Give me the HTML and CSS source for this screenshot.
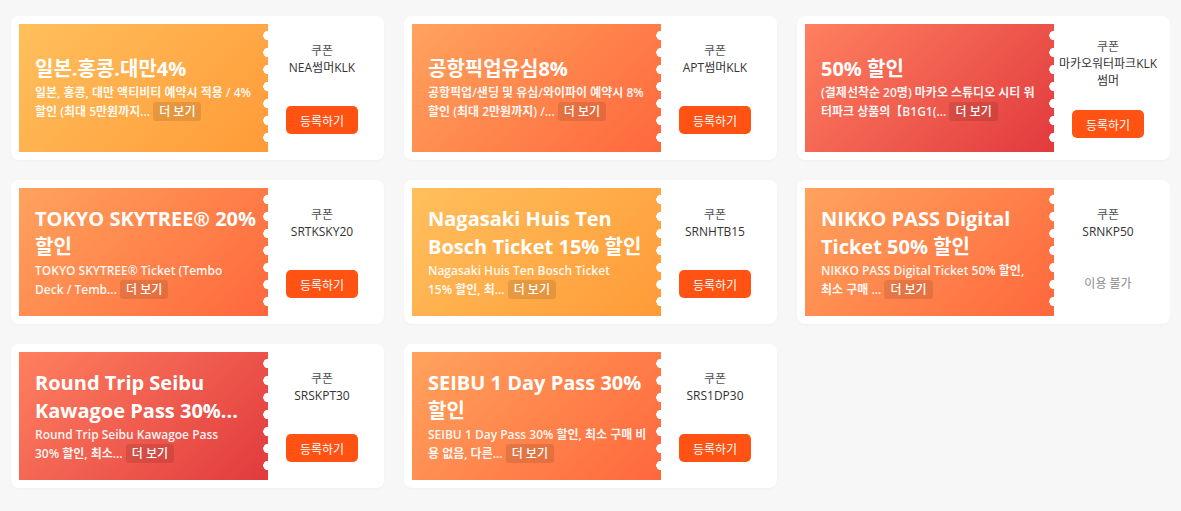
FILE: index.html
```html
<!DOCTYPE html>
<html lang="ko">
<head>
<meta charset="utf-8">
<title>쿠폰</title>
<link rel="stylesheet" href="styles.css">
</head>
<body>
<div class="grid">
  <div class="card">
    <div class="ticket t-yellow">
      <div class="title">일본.홍콩.대만4%</div>
      <div class="desc">일본, 홍콩, 대만 액티비티 예약시 적용 / 4%<br>할인 (최대 5만원까지... <span class="chip">더 보기</span></div>
    </div>
    <div class="side">
      <div class="info"><div class="label">쿠폰</div><div class="code">NEA썸머KLK</div></div>
      <button class="btn">등록하기</button>
    </div>
  </div>
  <div class="card">
    <div class="ticket t-orange">
      <div class="title">공항픽업유심8%</div>
      <div class="desc">공항픽업/샌딩 및 유심/와이파이 예약시 8%<br>할인 (최대 2만원까지) /... <span class="chip">더 보기</span></div>
    </div>
    <div class="side">
      <div class="info"><div class="label">쿠폰</div><div class="code">APT썸머KLK</div></div>
      <button class="btn">등록하기</button>
    </div>
  </div>
  <div class="card">
    <div class="ticket t-red">
      <div class="title">50% 할인</div>
      <div class="desc">(결제선착순 20명) 마카오 스튜디오 시티 워<br>터파크 상품의【B1G1(... <span class="chip">더 보기</span></div>
    </div>
    <div class="side side-tight">
      <div class="info"><div class="label">쿠폰</div><div class="code">마카오워터파크KLK<br>썸머</div></div>
      <button class="btn">등록하기</button>
    </div>
  </div>

  <div class="card">
    <div class="ticket t-orange">
      <div class="title">TOKYO SKYTREE® 20%<br>할인</div>
      <div class="desc">TOKYO SKYTREE® Ticket (Tembo<br>Deck / Temb... <span class="chip">더 보기</span></div>
    </div>
    <div class="side">
      <div class="info"><div class="label">쿠폰</div><div class="code">SRTKSKY20</div></div>
      <button class="btn">등록하기</button>
    </div>
  </div>
  <div class="card">
    <div class="ticket t-yellow">
      <div class="title">Nagasaki Huis Ten<br>Bosch Ticket 15% 할인</div>
      <div class="desc">Nagasaki Huis Ten Bosch Ticket<br>15% 할인, 최... <span class="chip">더 보기</span></div>
    </div>
    <div class="side">
      <div class="info"><div class="label">쿠폰</div><div class="code">SRNHTB15</div></div>
      <button class="btn">등록하기</button>
    </div>
  </div>
  <div class="card">
    <div class="ticket t-orange">
      <div class="title">NIKKO PASS Digital<br>Ticket 50% 할인</div>
      <div class="desc">NIKKO PASS Digital Ticket 50% 할인,<br>최소 구매 ... <span class="chip">더 보기</span></div>
    </div>
    <div class="side">
      <div class="info"><div class="label">쿠폰</div><div class="code">SRNKP50</div></div>
      <div class="na">이용 불가</div>
    </div>
  </div>

  <div class="card">
    <div class="ticket t-red">
      <div class="title">Round Trip Seibu<br>Kawagoe Pass 30%...</div>
      <div class="desc">Round Trip Seibu Kawagoe Pass<br>30% 할인, 최소... <span class="chip">더 보기</span></div>
    </div>
    <div class="side">
      <div class="info"><div class="label">쿠폰</div><div class="code">SRSKPT30</div></div>
      <button class="btn">등록하기</button>
    </div>
  </div>
  <div class="card">
    <div class="ticket t-orange">
      <div class="title">SEIBU 1 Day Pass 30%<br>할인</div>
      <div class="desc">SEIBU 1 Day Pass 30% 할인, 최소 구매 비<br>용 없음, 다른... <span class="chip">더 보기</span></div>
    </div>
    <div class="side">
      <div class="info"><div class="label">쿠폰</div><div class="code">SRS1DP30</div></div>
      <button class="btn">등록하기</button>
    </div>
  </div>
</div>
</body>
</html>
```

FILE: styles.css
```css
* { box-sizing: border-box; }
html, body { margin: 0; padding: 0; }
body {
  background: #f7f7f7;
  font-family: "Open Sans", "Noto Sans CJK KR", sans-serif;
  width: 1181px;
  height: 511px;
  overflow: hidden;
}
.grid {
  display: grid;
  grid-template-columns: repeat(3, 373px);
  grid-auto-rows: 144px;
  column-gap: 20px;
  row-gap: 20px;
  padding: 16px 11px;
}
.card {
  background: #fff;
  border-radius: 8px;
  padding: 8px;
  display: flex;
  box-shadow: 0 1px 3px rgba(0,0,0,0.03);
}
.ticket {
  position: relative;
  width: 249px;
  flex: none;
  height: 128px;
  padding: 0 4px 0 16px;
  display: flex;
  flex-direction: column;
  justify-content: center;
  color: #fff;
}
.ticket::after {
  content: "";
  position: absolute;
  right: 0;
  top: 3px;
  width: 5px;
  height: 119px;
  background: radial-gradient(circle at 100% 50%, #fff 4.5px, rgba(255,255,255,0) 5px);
  background-size: 5px 17px;
  background-repeat: repeat-y;
}
.t-yellow { background: linear-gradient(135deg, #ffc05c 0%, #ff9a38 100%); }
.t-orange { background: linear-gradient(135deg, #ffa35d 0%, #ff673c 100%); }
.t-red { background: linear-gradient(135deg, #ff805f 0%, #e13a3e 100%); }
.title {
  font-size: 20px;
  line-height: 28px;
  font-weight: 700;
  white-space: nowrap;
}
.desc {
  font-size: 12px;
  line-height: 19px;
  font-weight: 600;
  color: rgba(255,255,255,0.95);
  white-space: nowrap;
}
.chip {
  display: inline-block;
  background: rgba(0,0,0,0.1);
  border-radius: 3px;
  padding: 0 6px;
  line-height: 19px;
  font-weight: 500;
  color: #fff;
}
.side {
  flex: 1;
  display: flex;
  flex-direction: column;
  align-items: center;
  justify-content: center;
  gap: 30px;
  text-align: center;
}
.side-tight { gap: 21px; }
.info {
  font-size: 12px;
  line-height: 17px;
  color: #333;
  white-space: nowrap;
}
.label { color: #555; }
.btn {
  width: 72px;
  height: 28px;
  border: 0;
  border-radius: 5px;
  background: #ff5213;
  color: #fff;
  font-family: "Noto Sans CJK KR", sans-serif;
  font-size: 12px;
  padding: 0;
}
.na {
  height: 28px;
  line-height: 28px;
  font-size: 12px;
  color: #8a8a8a;
}
```
